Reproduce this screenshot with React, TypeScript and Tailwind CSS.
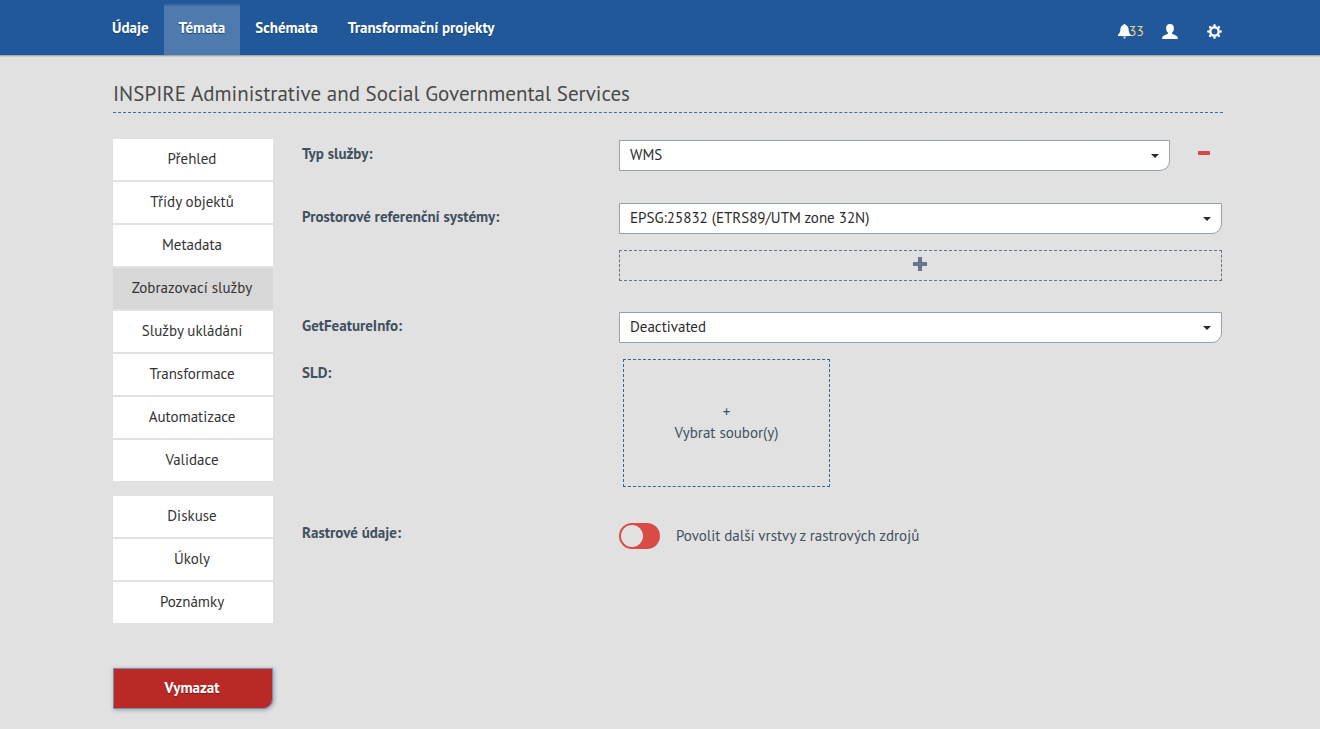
import { useState } from "react";
import type { ReactNode } from "react";

const navItems = ["Údaje", "Témata", "Schémata", "Transformační projekty"];

const mainMenu = [
  "Přehled",
  "Třídy objektů",
  "Metadata",
  "Zobrazovací služby",
  "Služby ukládání",
  "Transformace",
  "Automatizace",
  "Validace",
];

const noteMenu = ["Diskuse", "Úkoly", "Poznámky"];

const gearTeeth = [0, 45, 90, 135, 180, 225, 270, 315];

function BellIcon() {
  return (
    <svg viewBox="0 0 13 15" className="h-[15px] w-[13px]" fill="currentColor" aria-hidden="true">
      <path d="M6.500 0c.7 0 1.100.5 1.200 1.100C9.600 1.700 10.400 3.300 10.600 5.200c.2 2.500.6 4.100 2.400 5.500V12H0v-1.300c1.800-1.400 2.200-3 2.400-5.500C2.600 3.300 3.400 1.700 5.300 1.100 5.400.5 5.800 0 6.500 0z" />
      <path d="M4.300 12.600h4.400C8.400 13.400 7.500 13.400 7.200 13.600v1.100H5.800v-1.100C5.500 13.400 4.600 13.400 4.300 12.600z" opacity=".7" />
    </svg>
  );
}

function UserIcon() {
  return (
    <svg viewBox="0 0 16 15" className="h-[15px] w-4" fill="currentColor" aria-hidden="true">
      <path d="M8 0c2.500 0 3.900 1.500 3.900 3.900 0 2-.6 3.700-1.700 4.700-.3.300-.4 1 0 1.200 1.100.6 2.900 1.100 4.500 2.100.8.500 1.200 1.200 1.200 3.100H.1c0-1.900.4-2.600 1.200-3.100 1.600-1 3.400-1.500 4.500-2.100.4-.2.3-.9 0-1.200C4.700 7.600 4.100 5.900 4.100 3.900 4.100 1.500 5.500 0 8 0z" />
    </svg>
  );
}

function GearIcon() {
  return (
    <svg viewBox="0 0 15 15" className="size-[15px]" aria-hidden="true">
      <circle cx="7.500" cy="7.500" r="4.200" fill="none" stroke="currentColor" strokeWidth="2.400" />
      {gearTeeth.map((angle) => (
        <path
          key={angle}
          d="M6.200 2.600 6.500.2h2l.3 2.400z"
          fill="currentColor"
          transform={`rotate(${angle} 7.500 7.500)`}
        />
      ))}
    </svg>
  );
}

function Row({ label, htmlFor, children }: { label: string; htmlFor: string; children: ReactNode }) {
  return (
    <div className="grid grid-cols-[317fr_603fr]">
      <label htmlFor={htmlFor} className="pt-1 font-bold leading-5">
        {label}
      </label>
      <div>{children}</div>
    </div>
  );
}

function Select({ id, options }: { id: string; options: string[] }) {
  return (
    <div className="relative min-w-0 flex-1">
      <select
        id={id}
        className="block h-[31px] w-full appearance-none rounded-br-[10px] border border-[#96a1ad] bg-white pr-8 pl-2.5 text-[#2b2b2b]"
      >
        {options.map((option) => (
          <option key={option}>{option}</option>
        ))}
      </select>
      <svg
        viewBox="0 0 8 4"
        className="pointer-events-none absolute top-3.5 right-[11px] h-1 w-2 text-[#2b2b2b]"
        fill="currentColor"
        aria-hidden="true"
      >
        <path d="M0 0h8L4 4z" />
      </svg>
    </div>
  );
}

function SideMenu({ items, active, onSelect }: { items: string[]; active: string; onSelect: (item: string) => void }) {
  return (
    <ul className="flex flex-col gap-0.5">
      {items.map((item) => (
        <li key={item}>
          <button
            type="button"
            onClick={() => onSelect(item)}
            className={
              item === active
                ? "block h-[41px] w-full bg-[#d7d7d7] pr-0.5 text-[#333]"
                : "block h-[41px] w-full bg-white pr-0.5 text-[#333]"
            }
          >
            {item}
          </button>
        </li>
      ))}
    </ul>
  );
}

export default function App() {
  const [active, setActive] = useState("Zobrazovací služby");
  const [raster, setRaster] = useState(false);

  return (
    <div className="min-h-screen bg-[#e1e1e1] font-['PT_Sans','Lato',sans-serif] text-[15px] text-[#3f5060]">
      <header className="border-b border-[#a9a9ab] bg-[#205899] pl-4 shadow-[0_1px_1px_#cfcac6]">
        <div className="mx-auto flex max-w-[1110px] justify-between">
          <nav className="-ml-4 flex pt-1">
            {navItems.map((item) => (
              <a
                key={item}
                href="#"
                className={
                  item === "Témata"
                    ? "flex h-[51px] items-center border-t-2 border-[#3a6ba5] bg-[#4f7aae] px-[15px] pb-1 font-bold text-white [text-shadow:0_1px_1px_#1d4577]"
                    : "flex h-[51px] items-center border-t-2 border-transparent px-[15px] pb-1 font-bold text-white [text-shadow:0_1px_1px_#1d4577]"
                }
              >
                {item}
              </a>
            ))}
          </nav>
          <div className="flex items-center pt-2 pr-px text-white">
            <a href="#" aria-label="33 oznámení" className="mr-[18px] flex items-center">
              <BellIcon />
              <span className="-ml-0.5 pb-0.5 text-sm leading-4 text-[#edd382]">33</span>
            </a>
            <a href="#" aria-label="Uživatel" className="mr-[29px]">
              <UserIcon />
            </a>
            <a href="#" aria-label="Nastavení">
              <GearIcon />
            </a>
          </div>
        </div>
      </header>

      <div className="pl-4">
        <div className="mx-auto max-w-[1110px] pb-5">
          <h1 className="border-b border-dashed border-[#2f6fb0] pt-6 pb-1 text-[21px] leading-7 text-[#4a4a4a]">
            INSPIRE Administrative and Social Governmental Services
          </h1>
          <div className="flex gap-[29px] pt-[26px]">
            <aside className="w-40 shrink-0">
              <SideMenu items={mainMenu} active={active} onSelect={setActive} />
              <div className="pt-[15px]">
                <SideMenu items={noteMenu} active={active} onSelect={setActive} />
              </div>
              <button
                type="button"
                className="mt-[45px] block h-[41px] w-full rounded-br-[10px] border border-[#7f8fa3] bg-[#b92a26] pr-0.5 font-bold text-white shadow-[1px_1px_4px_#8f9db3] [text-shadow:0_1px_1px_#7a1a17]"
              >
                Vymazat
              </button>
            </aside>

            <main className="min-w-0 flex-1 pt-px pr-px">
              <Row label="Typ služby:" htmlFor="service-type">
                <div className="flex">
                  <Select id="service-type" options={["WMS", "WMTS"]} />
                  <button
                    type="button"
                    aria-label="Odebrat"
                    className="flex h-[26px] w-[52px] items-center justify-end pr-3 text-[#d84a47]"
                  >
                    <svg viewBox="0 0 12 4" className="h-1 w-3" fill="currentColor" aria-hidden="true">
                      <rect width="12" height="4" rx=".6" />
                    </svg>
                  </button>
                </div>
              </Row>

              <div className="pt-8">
                <Row label="Prostorové referenční systémy:" htmlFor="reference-system">
                  <Select id="reference-system" options={["EPSG:25832 (ETRS89/UTM zone 32N)"]} />
                  <button
                    type="button"
                    aria-label="Přidat"
                    className="mt-4 flex h-[31px] w-full items-center justify-center border border-dashed border-[#64778a] pr-0.5 pb-1 text-[#64778a]"
                  >
                    <svg viewBox="0 0 14 14" className="size-3.5" fill="currentColor" aria-hidden="true">
                      <path d="M5.500 0h3q.5 0 .5.500V5h4.500q.5 0 .5.500v3q0 .5-.5.500H9v4.500q0 .5-.5.500h-3q-.5 0-.5-.5V9H.5Q0 9 0 8.500v-3Q0 5 .5 5H5V.5Q5 0 5.500 0z" />
                    </svg>
                  </button>
                </Row>
              </div>

              <div className="pt-[31px]">
                <Row label="GetFeatureInfo:" htmlFor="feature-info">
                  <Select id="feature-info" options={["Deactivated", "Activated"]} />
                </Row>
              </div>

              <div className="pt-4">
                <Row label="SLD:" htmlFor="sld-file">
                  <label className="ml-1 flex h-32 w-[207px] cursor-pointer flex-col items-center justify-center border border-dashed border-[#2f65a0] pb-0.5 leading-[21px]">
                    <input id="sld-file" type="file" multiple className="sr-only" />
                    <span>+</span>
                    <span>Vybrat soubor(y)</span>
                  </label>
                </Row>
              </div>

              <div className="pt-8">
                <Row label="Rastrové údaje:" htmlFor="raster">
                  <label className="flex items-center gap-4 pt-1">
                    <input
                      id="raster"
                      type="checkbox"
                      role="switch"
                      checked={raster}
                      onChange={(event) => setRaster(event.target.checked)}
                      className="h-[26px] w-[41px] appearance-none rounded-full bg-[#d94b47] p-0.5 before:block before:size-[22px] before:rounded-full before:bg-[#e1e1e1] checked:bg-[#4f9a5b] checked:before:ml-auto"
                    />
                    <span>Povolit další vrstvy z rastrových zdrojů</span>
                  </label>
                </Row>
              </div>
            </main>
          </div>
        </div>
      </div>
    </div>
  );
}
